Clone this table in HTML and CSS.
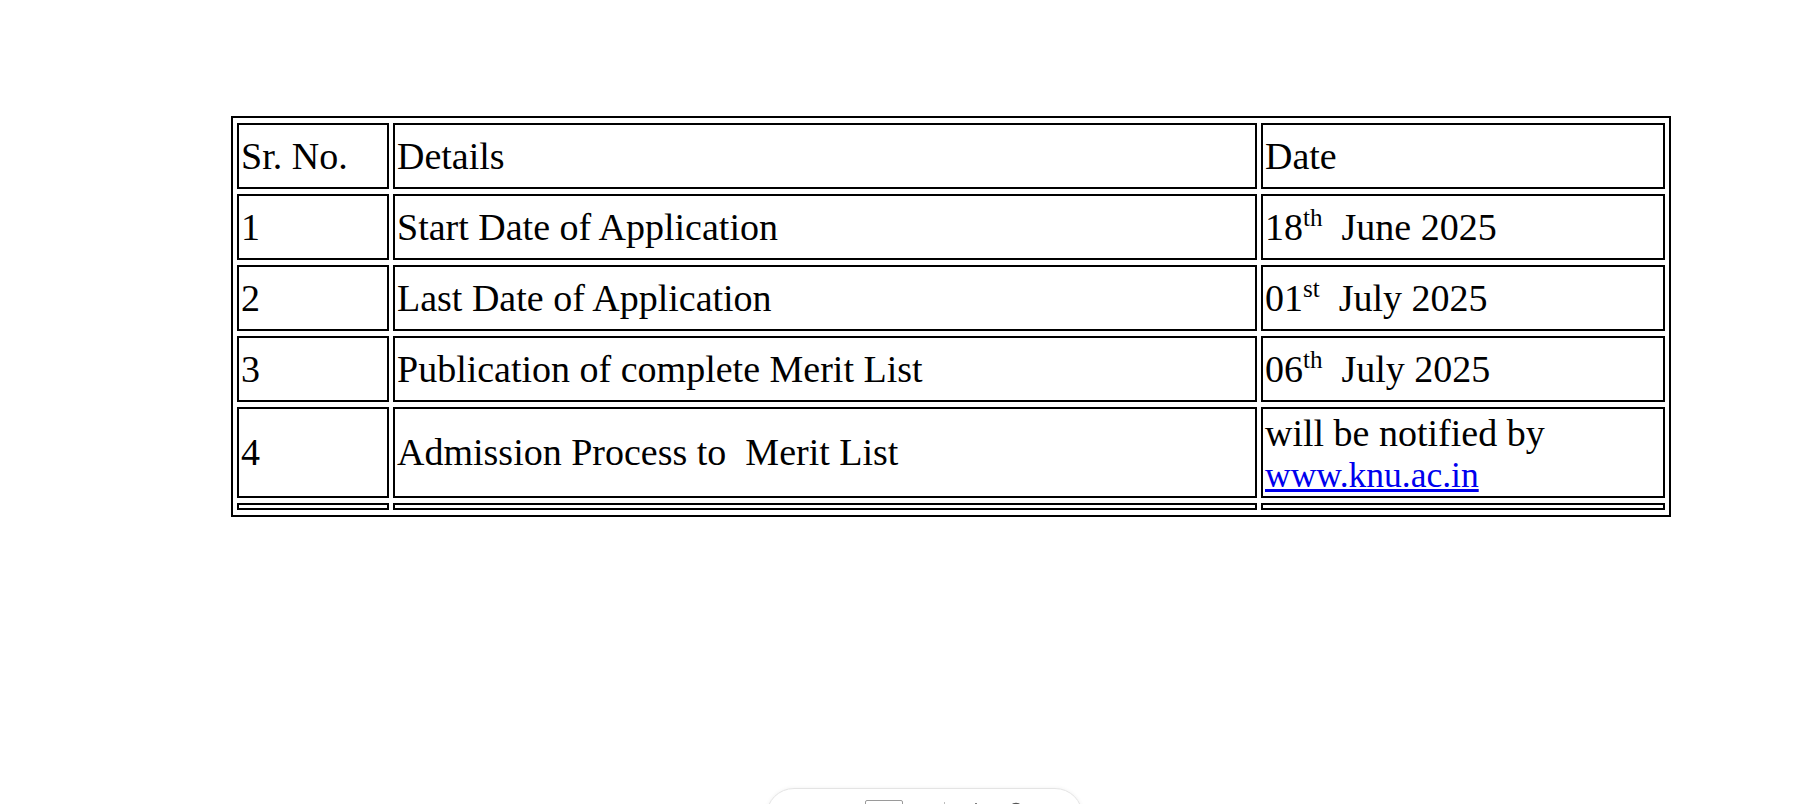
FILE: index.html
```html
<!DOCTYPE html>
<html>
<head>
<meta charset="utf-8">
<link rel="stylesheet" href="styles.css">
</head>
<body>
<div class="page">
  <table class="schedule">
    <colgroup>
      <col class="c1"><col class="c2"><col class="c3">
    </colgroup>
    <tr class="row">
      <td>Sr. No.</td>
      <td>Details</td>
      <td>Date</td>
    </tr>
    <tr class="row">
      <td>1</td>
      <td>Start Date of Application</td>
      <td>18<sup>th</sup>&nbsp; June 2025</td>
    </tr>
    <tr class="row">
      <td>2</td>
      <td>Last Date of Application</td>
      <td>01<sup>st</sup>&nbsp; July 2025</td>
    </tr>
    <tr class="row">
      <td>3</td>
      <td>Publication of complete Merit List</td>
      <td>06<sup>th</sup>&nbsp; July 2025</td>
    </tr>
    <tr class="row tall">
      <td>4</td>
      <td>Admission Process to &nbsp;Merit List</td>
      <td class="notify">will be notified by<br><a href="#">www.knu.ac.in</a></td>
    </tr>
    <tr class="empty">
      <td></td><td></td><td></td>
    </tr>
  </table>
</div>

<div class="toolbar">
  <div class="pagebox"></div>
  <div class="divider"></div>
  <svg class="tb-icon i1" width="14" height="10" viewBox="0 0 14 10"><path d="M7 2 L7 10" stroke="#555" stroke-width="1.5" fill="none"/></svg>
  <svg class="tb-icon i2" width="16" height="10" viewBox="0 0 16 10"><circle cx="8" cy="9" r="6.5" stroke="#555" stroke-width="1.5" fill="none"/></svg>
  <svg class="tb-icon i3" width="14" height="10" viewBox="0 0 14 10"><path d="M7 3 L7 10" stroke="#555" stroke-width="1.5" fill="none"/></svg>
</div>
</body>
</html>
```

FILE: styles.css
```css
html, body {
  margin: 0;
  padding: 0;
  background: #ffffff;
}

.page {
  padding: 116px 0 0 231px;
}

.schedule {
  width: 1440px;
  table-layout: fixed;
  border-collapse: separate;
  border-spacing: 4px 5px;
  border: 2px solid #000;
  font-family: "Liberation Serif", "Times New Roman", serif;
  font-size: 38px;
  color: #000;
}

.c1 { width: 152px; }
.c2 { width: 864px; }
.c3 { width: 404px; }

.schedule td {
  box-sizing: border-box;
  border: 2px solid #000;
  padding: 0 1px 0 2px;
  vertical-align: middle;
  white-space: nowrap;
}

.row td {
  height: 66px;
}

.row.tall td {
  height: 91px;
  line-height: 41px;
}

.row.tall td.notify {
  padding-top: 4px;
}

.empty td {
  height: 7px;
  padding: 0;
}

.schedule sup {
  font-size: 0.66em;
  vertical-align: 0.55em;
  line-height: 0;
}

.schedule a {
  color: #0000ee;
  text-decoration: underline;
  font-size: 0.935em;
}

.toolbar {
  position: fixed;
  left: 766px;
  top: 788px;
  width: 317px;
  height: 60px;
  box-sizing: border-box;
  border: 1px solid #e4e4e4;
  border-radius: 28px;
  background: #fff;
  box-shadow: 0 0 4px rgba(0, 0, 0, 0.06);
}

.pagebox {
  position: absolute;
  left: 98px;
  top: 11px;
  width: 36px;
  height: 30px;
  border: 1px solid #9a9a9a;
  border-radius: 2px;
}

.divider {
  position: absolute;
  left: 177px;
  top: 13px;
  width: 1px;
  height: 30px;
  background: #bdbdbd;
}

.tb-icon {
  position: absolute;
  top: 12px;
}
.i1 { left: 202px; }
.i2 { left: 241px; }
.i3 { left: 280px; }
```
